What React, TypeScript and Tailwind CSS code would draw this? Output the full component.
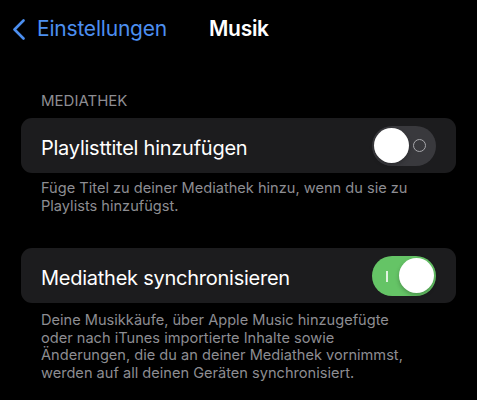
import React from 'react';

const font = { fontFamily: 'Inter, "Liberation Sans", sans-serif' };

const Toggle: React.FC<{ on: boolean }> = ({ on }) => (
  <div
    className={`relative w-[64px] h-[40px] rounded-full shrink-0 ${on ? 'bg-[#65c466]' : 'bg-[#39393d]'}`}
  >
    {on ? (
      <span className="absolute left-[14px] top-[15px] w-[1.5px] h-[11px] bg-white/80" />
    ) : (
      <span className="absolute left-[41px] top-[13.5px] w-[13px] h-[13px] rounded-full border-[1.5px] border-[#a7a7ab]" />
    )}
    <span
      className={`absolute top-[2.5px] w-[35px] h-[35px] rounded-full bg-white shadow-[0_2px_4px_rgba(0,0,0,0.25)] ${on ? 'left-[27px]' : 'left-[2px]'}`}
    />
  </div>
);

const Row: React.FC<{ label: string; on: boolean }> = ({ label, on }) => (
  <div className="mx-[21px] h-[55px] rounded-[11px] bg-[#1c1c1e] flex items-center justify-between pl-[20px] pr-[20px]">
    <span className="pt-[5px] text-[20px] text-white tracking-[-0.25px]">{label}</span>
    <Toggle on={on} />
  </div>
);

export default function App() {
  return (
    <div className="w-[477px] h-[400px] bg-black overflow-hidden" style={font}>
      {/* nav bar */}
      <div className="h-[58px] flex items-center pl-[12px]">
        <svg width="14" height="21" viewBox="0 0 14 21" className="shrink-0">
          <path d="M11.5 1.5 L2.5 10.5 L11.5 19.5" fill="none" stroke="#4c8ff0" strokeWidth="2.6" strokeLinecap="round" strokeLinejoin="round" />
        </svg>
        <span className="ml-[11px] text-[21px] text-[#4c8ff0] tracking-[-0.2px]">Einstellungen</span>
        <span className="ml-[42px] text-[21px] font-semibold text-white tracking-[-0.3px]">Musik</span>
      </div>

      <div className="pt-[33px]">
        <div className="pl-[41px] text-[15px] text-[#8d8d92] leading-[20px] mb-[7px]">MEDIATHEK</div>
        <Row label="Playlisttitel hinzufügen" on={false} />
        <p className="px-[41px] pt-[7px] text-[14.6px] leading-[17.5px] text-[#8d8d92] whitespace-nowrap">
          Füge Titel zu deiner Mediathek hinzu, wenn du sie zu
          <br />
          Playlists hinzufügst.
        </p>

        <div className="h-[33px]" />
        <Row label="Mediathek synchronisieren" on={true} />
        <p className="px-[41px] pt-[9px] text-[14.6px] leading-[17.5px] text-[#8d8d92] whitespace-nowrap">
          Deine Musikkäufe, über Apple Music hinzugefügte
          <br />
          oder nach iTunes importierte Inhalte sowie
          <br />
          Änderungen, die du an deiner Mediathek vornimmst,
          <br />
          werden auf all deinen Geräten synchronisiert.
        </p>
      </div>
    </div>
  );
}
